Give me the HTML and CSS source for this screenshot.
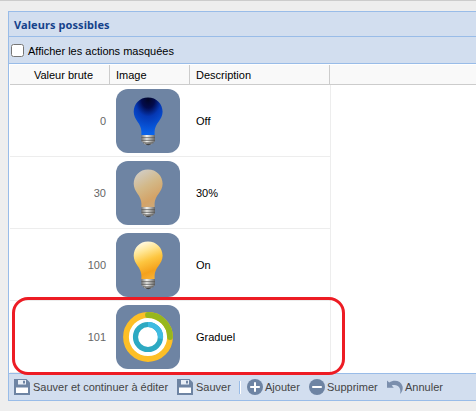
FILE: index.html
```html
<!DOCTYPE html>
<html lang="fr">
<head>
<meta charset="utf-8">
<title>Valeurs possibles</title>
<link rel="stylesheet" href="styles.css">
</head>
<body>
<svg class="defs" width="0" height="0">
  <defs>
    <linearGradient id="metal" x1="0" x2="1" y1="0" y2="0">
      <stop offset="0" stop-color="#777"/><stop offset=".4" stop-color="#f4f4f0"/><stop offset="1" stop-color="#666"/>
    </linearGradient>
    <radialGradient id="off" cx=".5" cy=".05" r=".9">
      <stop offset="0" stop-color="#020525"/><stop offset=".25" stop-color="#020b4e"/><stop offset=".5" stop-color="#0538b4"/><stop offset="1" stop-color="#0962ea"/>
    </radialGradient>
    <linearGradient id="dim" x1=".2" x2=".65" y1="0" y2="1">
      <stop offset="0" stop-color="#d2cec8"/><stop offset=".45" stop-color="#d3b887"/><stop offset=".8" stop-color="#d4a367"/><stop offset="1" stop-color="#cda878"/>
    </linearGradient>
    <linearGradient id="on" x1=".3" x2=".6" y1="0" y2="1">
      <stop offset="0" stop-color="#fffbe8"/><stop offset=".25" stop-color="#ffe694"/><stop offset=".5" stop-color="#fdc640"/><stop offset=".8" stop-color="#f5a11b"/><stop offset="1" stop-color="#f8b135"/>
    </linearGradient>
    <path id="glass" d="M32 8.5C23.5 8.5 17.7 14.8 17.7 22.8C17.7 31 25.4 34.5 25.4 42.5V46.5H38.6V42.5C38.6 34.5 46.6 31 46.6 22.8C46.6 14.8 40.5 8.5 32 8.5Z"/>
    <g id="base">
      <path fill="url(#metal)" d="M25.4 46H39V52.2L36 55Q32.2 57 28.4 55L25.4 52.2Z"/>
      <path fill="none" stroke="#555" stroke-width=".8" d="M25.4 48.7H39M25.4 51.3H39M27 53.8H37.4"/>
      <path fill="#444" d="M28.6 54.5H35.8Q34.5 56.3 32.2 56.3T28.6 54.5"/>
    </g>
    <g id="disk">
      <path fill="#6e84a3" d="M0 0H12.5L16 3.5V16H0Z"/>
      <path fill="#e8eef6" d="M4 1H12V5.5H4Z"/>
      <path fill="#6e84a3" d="M9 1.7H11V4.5H9Z"/>
      <path fill="#fff" d="M2 8.5H14V14H2Z"/>
    </g>
  </defs>
</svg>
<main class="panel">
  <h1 class="title">Valeurs possibles</h1>
  <label class="filter"><input class="check" type="checkbox"><span class="caption">Afficher les actions masquées</span></label>
  <div class="grid">
    <div class="head">
      <span class="col raw">Valeur brute</span><span class="col image">Image</span><span class="col desc">Description</span>
    </div>
    <div class="row">
      <span class="value">0</span>
      <svg class="tile" viewBox="0 0 64 64"><use href="#glass" fill="url(#off)"/><use href="#base"/></svg>
      <span class="name">Off</span>
    </div>
    <div class="row">
      <span class="value">30</span>
      <svg class="tile" viewBox="0 0 64 64"><use href="#glass" fill="url(#dim)"/><use href="#base"/></svg>
      <span class="name">30%</span>
    </div>
    <div class="row">
      <span class="value">100</span>
      <svg class="tile" viewBox="0 0 64 64"><use href="#glass" fill="url(#on)"/><use href="#base"/></svg>
      <span class="name">On</span>
    </div>
    <div class="row">
      <span class="value">101</span>
      <svg class="tile" viewBox="0 0 64 64" fill="none">
        <circle cx="32" cy="32" r="22" fill="#fff"/>
        <circle cx="32" cy="32" r="22" stroke="#fdbf26" stroke-width="5.8"/>
        <path d="M32 10A22 22 0 0 1 54 32" stroke="#97b71c" stroke-width="5.8" stroke-linecap="round"/>
        <circle cx="32" cy="32" r="12.5" stroke="#2da9c2" stroke-width="5.2"/>
        <path d="M32 19.5A12.5 12.5 0 0 1 44.4 33.6" stroke="#3fbbe2" stroke-width="5.2"/>
      </svg>
      <span class="name">Graduel</span>
    </div>
    <div class="marker"></div>
  </div>
  <footer class="actions">
    <button class="btn save-edit"><svg class="icon" viewBox="0 0 16 16"><use href="#disk"/></svg>Sauver et continuer à éditer</button>
    <button class="btn save"><svg class="icon" viewBox="0 0 16 16"><use href="#disk"/></svg>Sauver</button>
    <i class="sep"></i>
    <button class="btn add"><svg class="icon" viewBox="0 0 16 16"><circle cx="8" cy="8" r="8" fill="#6e84a3"/><path d="M8 3.2V12.8M3.2 8H12.8" stroke="#fff" stroke-width="2"/></svg>Ajouter</button>
    <button class="btn remove"><svg class="icon" viewBox="0 0 16 16"><circle cx="8" cy="8" r="8" fill="#6e84a3"/><path d="M3.2 8H12.8" stroke="#fff" stroke-width="2"/></svg>Supprimer</button>
    <button class="btn undo"><svg class="icon" viewBox="0 0 16 16"><path fill="#7b8fad" d="M0 1.5L2.2 3.6C7 .4 13.8 1.5 15.5 7.2C16.2 10 15.2 13 13 15C13.8 11.5 13.3 8.5 10.8 6.9C8.8 5.7 6.5 5.8 4.7 6.4L6.8 8.7H0Z"/></svg>Annuler</button>
  </footer>
</main>
</body>
</html>
```

FILE: styles.css
```css
* { box-sizing: border-box; }

body {
  margin: 0;
  height: 411px;
  overflow: hidden;
  padding: 10px 0 0 8px;
  border-top: 1px solid #ccc;
  background: #eee;
  color: #000;
  font: 11px/13px "Liberation Sans", Arial, sans-serif;
}

.defs { position: absolute; }

.panel {
  height: 390px;
  border: 1px solid #99bce8;
  border-right: 0;
  background: #d2deef;
}

.title {
  height: 25px;
  margin: 0;
  padding: 5px 0 0 5px;
  border-bottom: 1px solid #99bce8;
  color: #15428b;
  font: bold 11px/15px "Noto Sans", sans-serif;
  letter-spacing: .08px;
}

.filter {
  display: flex;
  align-items: center;
  height: 27px;
  padding-left: 2px;
  border-bottom: 1px solid #99bce8;
}

.caption { padding-top: 2px; }

.check {
  width: 13px;
  height: 13px;
  margin: 0 4px 0 0;
}

.grid {
  position: relative;
  height: 309px;
  background: #fff;
  padding: 1px 0 0 1px;
}

.head {
  display: flex;
  height: 20px;
  border-bottom: 1px solid #ccc;
  background: #f9f9f9;
}

.col {
  padding: 4px 6px 0;
  border-right: 1px solid #ccc;
}

.raw { width: 100px; padding-right: 16px; text-align: right; }
.image { width: 80px; }
.desc { width: 140px; }

.row {
  display: grid;
  grid-template-columns: 96px 64px 1fr;
  column-gap: 10px;
  align-items: center;
  width: 321px;
  height: 72px;
  border-right: 1px solid #ededed;
  border-bottom: 1px solid #ededed;
}

.name { padding: 2px 0 0 6px; }
.value { padding-top: 2px; color: #666; text-align: right; }

.tile {
  width: 64px;
  height: 64px;
  border-radius: 12px;
  background: #6e84a3;
}

.marker {
  position: absolute;
  left: 3px;
  top: 233px;
  width: 333px;
  height: 78px;
  border: 3px solid #ed1c24;
  border-radius: 16px;
}

.actions {
  display: flex;
  height: 27px;
  padding: 0 0 0 5px;
  border-top: 1px solid #99bce8;
  color: #444;
}

.btn {
  display: flex;
  align-items: center;
  gap: 3px;
  margin: 0;
  padding: 0;
  border: 0;
  background: none;
  color: inherit;
  font: inherit;
  white-space: nowrap;
}

.icon { flex: none; width: 16px; height: 16px; }
.save-edit { width: 163px; }
.save { width: 62px; }

.sep {
  width: 2px;
  height: 13px;
  margin: 7px 6px 0 0;
  border-left: 1px solid #99bce8;
  border-right: 1px solid #fff;
}

.add, .remove, .undo { gap: 2px; }
.add { width: 62px; }
.remove { width: 78px; }
```
